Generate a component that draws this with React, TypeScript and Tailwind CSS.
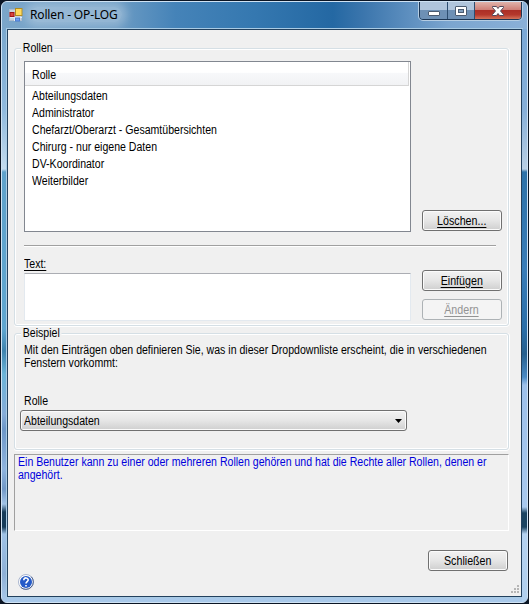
import React from "react";

function Line({ t, className = "" }: { t: string; className?: string }) {
  return <div className={"w-fit origin-left scale-x-[0.88] whitespace-nowrap leading-[13px] " + className}>{t}</div>;
}

function Button({ children, disabled = false, underline = true }: { children: string; disabled?: boolean; underline?: boolean }) {
  return (
    <button
      className={
        "flex h-[21px] w-20 items-center justify-center rounded-[3px] border leading-[13px] " +
        (disabled
          ? "border-[#adb2b5] bg-[#f4f4f4] text-[#939393]"
          : "border-[#707070] bg-linear-to-b from-[#f2f2f2] from-0% via-[#e6e6e6] via-50% to-[#cfcfcf] to-100% text-black shadow-[inset_0_0_0_1px_#fbfbfb]")
      }
    >
      <span className={"mt-px block scale-x-[0.89] pr-px " + (underline ? "underline underline-offset-2" : "")}>{children}</span>
    </button>
  );
}

function Group({ title, className, children }: { title: string; className: string; children: React.ReactNode }) {
  return (
    <section className={"rounded-[3px] border border-[#d5dfe5] shadow-[inset_0_0_0_1px_#fff,0_1px_0_#fff,1px_0_0_#fff] " + className}>
      <Line t={title} className="-mt-[7px] ml-[6px] bg-[#f0f0f0] px-[2px]" />
      {children}
    </section>
  );
}

const roles = [
  "Abteilungsdaten",
  "Administrator",
  "Chefarzt/Oberarzt - Gesamtübersichten",
  "Chirurg - nur eigene Daten",
  "DV-Koordinator",
  "Weiterbilder",
];

export default function App() {
  return (
    <div className="flex h-[604px] w-[529px] bg-[#0b1524] pt-px font-['Liberation_Sans',Arial,sans-serif] text-[12px] text-black">
      <div className="ml-px flex h-[602px] w-[527px] flex-col overflow-hidden rounded-[6px] border border-[#cfe2f3] bg-[#a9c9ea]">
        <header className="flex h-[27px] shrink-0 items-start bg-[linear-gradient(to_right,#7ba6ca_0%,#6d9cc4_22%,#4583b8_33%,#3578b0_48%,#2468a3_63%,#3c76ad_69%,#7ba5cf_85%,#8ab0d8_100%)]">
          <svg className="ml-[7px] mt-[6px] h-[14px] w-[14px]" viewBox="0 0 14 14">
            <rect x="0.5" y="1.5" width="12" height="11" fill="#c9d3df" stroke="#aebccd" />
            <path d="M5.5 9v4M1 9.5h12" stroke="#e6ecf3" />
            <rect x="1" y="4.5" width="4" height="4" fill="#d8443c" stroke="#9e1518" />
            <rect x="6.5" y="0.5" width="6.5" height="7" fill="#ffd95a" stroke="#b08a1e" />
            <rect x="6.5" y="10" width="4" height="3" fill="#6f9ff0" stroke="#4b7bd0" />
          </svg>
          <div className="ml-[7px] mt-[5px] rounded-full bg-white/25 pr-1 font-['Noto_Sans','Open_Sans',sans-serif] text-[12px] leading-[15px] tracking-[-0.15px] shadow-[0_0_8px_5px_rgba(255,255,255,0.25)]">
            Rollen - OP-LOG
          </div>
          <div className="-mt-px ml-auto mr-[5px] flex h-[19px] w-[103px] overflow-hidden rounded-b-[4px] border border-[#1c3654] shadow-[0_0_0_1px_#b5cde3]">
            <div className="flex w-[28px] items-center justify-center border-r border-[#2c4d70] bg-linear-to-b from-[#b0c5dc] from-45% to-[#6d90b5] to-50%">
              <div className="mt-[5px] h-[5px] w-3 rounded-[1px] border border-[#4b5b70] bg-white" />
            </div>
            <div className="flex w-[27px] items-center justify-center border-r border-[#2c4d70] bg-linear-to-b from-[#b0c5dc] from-45% to-[#6d90b5] to-50%">
              <div className="flex h-[10px] w-3 items-center justify-center rounded-[1px] border border-[#4b5b70] bg-white">
                <div className="h-[4px] w-[6px] border border-[#4b5b70] bg-[#819fbe]" />
              </div>
            </div>
            <div className="flex flex-1 items-center justify-center bg-[linear-gradient(to_bottom,#e0b3ab_0%,#cf8078_45%,#ac2f26_50%,#b5382c_75%,#d4735a_100%)]">
              <svg className="h-[10px] w-3" viewBox="0 0 12 10">
                <path d="M0.5 0.5H4.5L6 2.5L7.5 0.5H11.5V1.5L8.5 5L11.5 8.5V9.5H7.5L6 7.5L4.5 9.5H0.5V8.5L3.5 5L0.5 1.5Z" fill="#fff" stroke="#53485a" />
              </svg>
            </div>
          </div>
        </header>
        <div className="flex min-h-0 flex-1">
          <div className="h-[573px] w-[5px] shrink-0 bg-[linear-gradient(to_bottom,#7aa8ce_0px,#8fb9dd_80px,#c3dbee_140px,#5fa2cb_143px,#5fa6d0_300px,#3f83ae_322px,#6bb4d8_345px,#86acd8_385px,#6d97c8_400px,#8fb4de_440px,#7198c6_460px,#a2c4e8_475px,#163c5a_483px,#163c5a_498px,#9fc2e6_505px,#8eb0d6_545px,#a9c9ea_573px)]" />
          <main className="flex h-[568px] w-[515px] shrink-0 flex-col border border-[#23415e] bg-[#f0f0f0] shadow-[0_0_0_1px_#a9cbe4]">
            <Group title="Rollen" className="ml-[6px] mt-[18px] h-[278px] w-[495px]">
              <div className="ml-[9px] mt-[6px] flex">
                <div className="h-[171px] w-[387px] border border-[#828790] bg-white">
                  <div className="mr-px h-[24px] border-b border-r border-[#d5d5d5] bg-linear-to-b from-white from-45% via-[#f7f8fa] via-50% to-[#f1f2f4] to-100% pl-[7px] pt-[7px]">
                    <Line t="Rolle" />
                  </div>
                  <ul className="pl-[7px] pt-[2px]">
                    {roles.map((r) => (
                      <li key={r} className="h-[17px] pt-[2px]"><Line t={r} /></li>
                    ))}
                  </ul>
                </div>
                <div className="ml-[11px] mt-[149px]"><Button>Löschen...</Button></div>
              </div>
              <div className="ml-[9px] mt-[13px] h-[2px] w-[472px] border-b border-t border-b-white border-t-[#a0a0a0]" />
              <Line t="Text:" className="ml-[9px] mt-[11px] underline underline-offset-2" />
              <div className="ml-[9px] flex">
                <div className="mt-[2px] h-[48px] w-[387px] border border-[#e3e9ef] border-t-[#abadb3] bg-white" />
                <div className="-mt-px ml-[11px] flex flex-col gap-2">
                  <Button>Einfügen</Button>
                  <Button disabled>Ändern</Button>
                </div>
              </div>
            </Group>
            <Group title="Beispiel" className="ml-[6px] mt-[7px] h-[117px] w-[495px]">
              <div className="ml-[9px] mt-[4px]">
                <Line t="Mit den Einträgen oben definieren Sie, was in dieser Dropdownliste erscheint, die in verschiedenen" />
                <Line t="Fenstern vorkommt:" />
                <Line t="Rolle" className="mt-[25px]" />
              </div>
              <div className="ml-[5px] mt-[2px] flex h-[21px] w-[387px] items-center justify-between rounded-[3px] border border-[#707070] bg-linear-to-b from-[#f2f2f2] via-[#e6e6e6] to-[#cfcfcf] pl-[3px] pr-[4px] shadow-[inset_0_0_0_1px_#fbfbfb]">
                <Line t="Abteilungsdaten" className="mt-px" />
                <svg className="h-1 w-[7px]" viewBox="0 0 7 4"><path d="M0 0h7L3.5 4z" /></svg>
              </div>
            </Group>
            <div className="ml-[6px] mt-[4px] h-[77px] w-[495px] border border-[#a0a0a0] border-b-white border-r-white pl-[3px] pt-[1px] text-[#0000dc]">
              <Line t="Ein Benutzer kann zu einer oder mehreren Rollen gehören und hat die Rechte aller Rollen, denen er" />
              <Line t="angehört." />
            </div>
            <div className="ml-[420px] mt-[19px]"><Button underline={false}>Schließen</Button></div>
            <div className="flex justify-between">
              <svg className="ml-[9px] mt-[2px] h-[18px] w-[18px]" viewBox="0 0 18 18">
                <circle cx="9" cy="9" r="7.5" fill="#fff" stroke="#a9b6cf" />
                <path d="M14.3 3.7A7.5 7.5 0 0 1 3.7 14.3" fill="none" stroke="#4a5f8c" />
                <circle cx="9" cy="9" r="6" fill="#245ac8" />
                <path d="M6.8 7.2C6.8 4 11.3 4.4 11.2 7C11.1 8.5 9 8.8 9 10.5M9 12v1.5" fill="none" stroke="#fff" strokeWidth="1.6" />
              </svg>
              <svg className="mr-px mt-[14px] h-[9px] w-[9px]" viewBox="0 0 9 9" fill="#b5b5b5">
                <path d="M6 0h2v2H6zM3 3h2v2H3zM6 3h2v2H6zM0 6h2v2H0zM3 6h2v2H3zM6 6h2v2H6z" />
              </svg>
            </div>
          </main>
          <div className="h-[573px] flex-1 bg-[linear-gradient(to_bottom,#7aa8d6_0px,#86afd8_80px,#b9cfe4_140px,#2d72a8_143px,#3a7db8_240px,#2a6ea8_300px,#275f8d_325px,#4a8ac4_348px,#9dc0ea_356px,#a9c9ee_478px,#1c4461_484px,#1c4461_498px,#b5d2f0_505px,#b0cfee_573px)]" />
        </div>
      </div>
    </div>
  );
}
